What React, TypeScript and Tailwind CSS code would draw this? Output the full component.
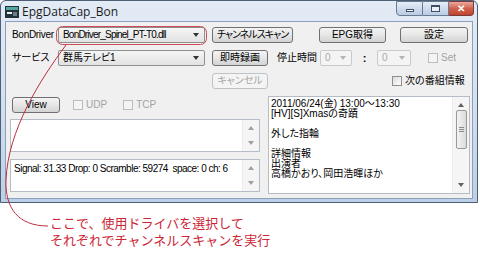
import React from 'react';

const ui = "font-['Liberation_Sans','Noto_Sans_CJK_JP',sans-serif] [font-feature-settings:'palt']";

function Btn({ w, children, disabled, tight }: { w: string; children: React.ReactNode; disabled?: boolean; tight?: boolean }) {
  return (
    <div
      className={`${w} h-[16px] shrink-0 flex items-center justify-center rounded-[3px] border text-[10px] leading-[14px] whitespace-nowrap ${
        tight ? 'tracking-[-1px]' : ''
      } ${
        disabled
          ? 'border-[#bfc3c6] bg-[#f4f4f4] text-[#a6a6a6]'
          : 'border-[#707070] bg-gradient-to-b from-[#f4f4f4] via-[#e6e6e6] to-[#d3d3d3] text-black'
      }`}
    >
      {children}
    </div>
  );
}

function Arrow({ up, color = '#555' }: { up?: boolean; color?: string }) {
  return (
    <svg width="6" height="4" viewBox="0 0 6 4" className="shrink-0">
      <path d={up ? 'M0 4 L3 0 L6 4 Z' : 'M0 0 L3 4 L6 0 Z'} fill={color} />
    </svg>
  );
}

function Combo({ w, value, disabled, tight }: { w: string; value: string; disabled?: boolean; tight?: boolean }) {
  return (
    <div
      className={`${w} h-[16px] shrink-0 flex items-center rounded-[2px] border pl-[4px] pr-[5px] text-[10px] leading-[14px] ${
        disabled
          ? 'border-[#c9c9c9] bg-[#f4f4f4] text-[#a8a8a8]'
          : 'border-[#8e8f8f] bg-gradient-to-b from-[#f6f6f6] to-[#e2e2e2] text-black'
      }`}
    >
      <span className={`flex-1 whitespace-nowrap overflow-hidden ${tight ? 'tracking-[-0.8px]' : ''}`}>{value}</span>
      <Arrow color={disabled ? '#b5b5b5' : '#333'} />
    </div>
  );
}

function Check({ label, disabled }: { label: string; disabled?: boolean }) {
  return (
    <div className="flex items-center gap-[3px] shrink-0">
      <div
        className={`w-[10px] h-[10px] border ${
          disabled ? 'border-[#bdbdbd] bg-[#f4f4f4]' : 'border-[#8e8f8f] bg-gradient-to-br from-[#dcdcdc] to-white'
        }`}
      />
      <span className={`text-[10px] leading-[14px] whitespace-nowrap ${disabled ? 'text-[#a3a3a3]' : 'text-black'}`}>{label}</span>
    </div>
  );
}

function ScrollBar({ thumb }: { thumb?: boolean }) {
  return (
    <div className="w-[17px] h-full bg-[#f5f5f5] border-l border-[#ececec] flex flex-col items-center justify-between py-[6px]">
      <Arrow up color={thumb ? '#606060' : '#a0a0a0'} />
      {thumb && (
        <div className="w-[11px] h-[39px] mt-[3px] rounded-[2px] border border-[#9a9a9a] bg-gradient-to-r from-[#f3f3f3] to-[#dcdcdc] flex flex-col items-center justify-center gap-[1px]">
          <div className="w-[5px] h-px bg-[#8a8a8a]" />
          <div className="w-[5px] h-px bg-[#8a8a8a]" />
          <div className="w-[5px] h-px bg-[#8a8a8a]" />
        </div>
      )}
      {thumb && <div className="flex-1" />}
      <Arrow color={thumb ? '#606060' : '#a0a0a0'} />
    </div>
  );
}

export default function App() {
  return (
    <div className={`relative w-[480px] h-[257px] bg-white overflow-hidden ${ui}`}>
      {/* ウィンドウ */}
      <div className="w-[478px] h-[203px] rounded-t-[6px] border border-[#4d5e77] bg-gradient-to-b from-[#e3ebf5] via-[#d3e0ef] to-[#bccfe6] flex flex-col px-[4px] pb-[3px]">
        {/* タイトルバー */}
        <div className="h-[20px] flex items-start">
          <svg width="14" height="12" viewBox="0 0 14 12" className="mt-[5px]">
            <rect x="0" y="0" width="14" height="12" fill="#23313a" />
            <rect x="1" y="1" width="12" height="3" fill="#4fa7a0" />
            <rect x="2" y="6" width="5" height="2" fill="#e8f0f0" />
            <rect x="8" y="6" width="4" height="4" fill="#6c7d86" />
          </svg>
          <span className="ml-[3px] mt-[3px] text-[12px] leading-[16px] text-[#1c1c1c] font-['Open_Sans','Liberation_Sans',sans-serif] [font-feature-settings:normal]">
            EpgDataCap_Bon
          </span>
          <div className="ml-auto flex items-start -mr-[1px]">
            <div className="w-[27px] h-[15px] rounded-bl-[4px] border border-[#6a7a92] bg-gradient-to-b from-[#e5edf7] to-[#b9cbe3] flex items-center justify-center">
              <div className="w-[8px] h-[3px] bg-white border border-[#3e4d63] mt-[4px]" />
            </div>
            <div className="w-[26px] h-[15px] border-y border-r border-[#6a7a92] bg-gradient-to-b from-[#e5edf7] to-[#b9cbe3] flex items-center justify-center">
              <div className="w-[9px] h-[7px] border border-[#3e4d63] border-t-2 bg-white/60" />
            </div>
            <div className="w-[25px] h-[15px] rounded-br-[4px] border-y border-r border-[#7a3a3a] bg-gradient-to-b from-[#e9a99c] via-[#d0604d] to-[#c0442f] flex items-center justify-center text-white text-[10px] font-bold leading-none">
              ✕
            </div>
          </div>
        </div>

        {/* クライアント領域 */}
        <div className="flex-1 bg-[#f0f0f0] border border-[#8ba0bc] flex flex-col">
          <div className="mt-[5px] h-[16px] flex items-center pl-[6px]">
            <span className="w-[46px] shrink-0 text-[10px] leading-[14px] tracking-[-0.3px] whitespace-nowrap">BonDriver</span>
            <Combo w="w-[147px]" value="BonDriver_Spinel_PT-T0.dll" tight />
            <div className="ml-[7px]"><Btn w="w-[81px]" tight>チャンネルスキャン</Btn></div>
            <div className="ml-[26px]"><Btn w="w-[67px]">EPG取得</Btn></div>
            <div className="ml-[14px]"><Btn w="w-[68px]">設定</Btn></div>
          </div>

          <div className="mt-[7px] h-[16px] flex items-center pl-[6px]">
            <span className="w-[46px] shrink-0 text-[10px] leading-[14px] whitespace-nowrap">サービス</span>
            <Combo w="w-[147px]" value="群馬テレビ1" />
            <div className="ml-[7px]"><Btn w="w-[56px]">即時録画</Btn></div>
            <span className="ml-[9px] w-[43px] shrink-0 text-[10px] leading-[14px] whitespace-nowrap">停止時間</span>
            <Combo w="w-[32px]" value="0" disabled />
            <span className="w-[25px] shrink-0 text-center text-[11px] font-bold leading-[14px]">:</span>
            <Combo w="w-[34px]" value="0" disabled />
            <div className="ml-[17px]"><Check label="Set" disabled /></div>
          </div>

          <div className="mt-[7px] h-[16px] flex items-center pl-[206px]">
            <Btn w="w-[56px]" disabled>キャンセル</Btn>
            <div className="ml-[124px]"><Check label="次の番組情報" /></div>
          </div>

          <div className="mt-[7px] flex pl-[4px]">
            <div className="w-[250px] shrink-0 flex flex-col">
              <div className="mt-[1px] h-[15px] flex items-center pl-[2px]">
                <Btn w="w-[48px]">View</Btn>
                <div className="ml-[13px]"><Check label="UDP" disabled /></div>
                <div className="ml-[16px]"><Check label="TCP" disabled /></div>
              </div>
              <div className="mt-[7px] h-[33px] flex bg-white border border-[#b5bcc5]">
                <div className="flex-1" />
                <ScrollBar />
              </div>
              <div className="mt-[7px] h-[33px] flex bg-white border border-[#b5bcc5]">
                <div className="flex-1 pl-[3px] pt-[3px] text-[10px] leading-[12px] tracking-[-0.5px] whitespace-nowrap">
                  Signal: 31.33 Drop: 0 Scramble: 59274&nbsp;&nbsp;space: 0 ch: 6
                </div>
                <ScrollBar />
              </div>
            </div>
            <div className="ml-[8px] w-[202px] h-[98px] flex bg-white border border-[#b5bcc5]">
              <div className="flex-1 pl-[2px] pt-[2px] text-[10px] leading-[10px] whitespace-pre text-black">
                {'2011/06/24(金) 13:00～13:30\n[HV][S]Xmasの奇蹟\n\n外した指輪\n\n詳細情報\n出演者\n高橋かおり、岡田浩暉ほか'}
              </div>
              <ScrollBar thumb />
            </div>
          </div>
        </div>
      </div>

      {/* 注釈 */}
      <div className="mt-[11px] ml-[50px] text-[13px] leading-[17px] text-[#cc2535] font-['Noto_Sans_CJK_JP',sans-serif] [font-feature-settings:normal]">
        <div>ここで、使用ドライバを選択して</div>
        <div>それぞれでチャンネルスキャンを実行</div>
      </div>

      <svg className="absolute inset-0 pointer-events-none" width="480" height="257" viewBox="0 0 480 257">
        <rect x="56.5" y="26.5" width="150" height="18" rx="6" fill="none" stroke="#d04a5a" strokeWidth="1" />
        <path d="M66 45 C 40 80, 8 130, 6 180 C 5 208, 18 226, 48 226" fill="none" stroke="#b83040" strokeWidth="1" />
      </svg>
    </div>
  );
}
